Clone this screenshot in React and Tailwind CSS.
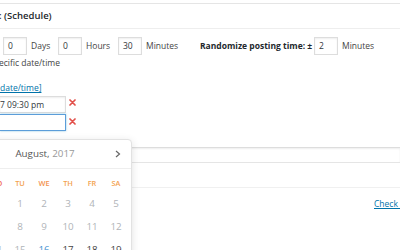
import React from 'react';

// Small red remove icon next to each date field
const RemoveIcon = () => (
  <svg width="7" height="7" viewBox="0 0 7 7" className="shrink-0">
    <path d="M1 1 L6 6 M6 1 L1 6" stroke="#e2504a" strokeWidth="1.7" strokeLinecap="round" />
  </svg>
);

const Chevron = ({ dir }) => (
  <svg width="6" height="8" viewBox="0 0 6 8">
    <path
      d={dir === 'right' ? 'M1 1 L4.5 4 L1 7' : 'M5 1 L1.5 4 L5 7'}
      fill="none"
      stroke="#666"
      strokeWidth="1.2"
    />
  </svg>
);

const NumberBox = ({ value }) => (
  <div className="w-[24px] h-[18px] shrink-0 border border-[#ddd] shadow-[inset_0_1px_2px_rgba(0,0,0,0.07)] bg-white flex items-center pl-[4px] text-[#32373c]">
    {value}
  </div>
);

const weekdays = [
  { label: 'SU', color: 'text-[#f06a5a]' },
  { label: 'MO', color: 'text-[#f06a5a]' },
  { label: 'TU', color: 'text-[#f3a24f]' },
  { label: 'WE', color: 'text-[#f3934f]' },
  { label: 'TH', color: 'text-[#f3a24f]' },
  { label: 'FR', color: 'text-[#f3a24f]' },
  { label: 'SA', color: 'text-[#f3a24f]' },
];

const weeks = [
  [null, null, 1, 2, 3, 4, 5],
  [6, 7, 8, 9, 10, 11, 12],
  [13, 14, 15, 16, 17, 18, 19],
];

const dayClass = (d) => {
  if (d === 16) return 'text-[#3e8ed0]';
  if (d > 16) return 'text-[#444]';
  return 'text-[#b0b4b8]';
};

export default function App() {
  return (
    <div className="relative w-[400px] h-[250px] overflow-hidden bg-white font-['Open_Sans','Noto_Sans',sans-serif] text-[8.5px] leading-[10px] text-[#444]">
      <div className="h-[3px]" />
      <div className="border-t border-[#e5e5e5]">
        {/* box title */}
        <div className="h-[25px] border-b border-[#eee] flex items-center">
          <span className="-ml-[1px] font-semibold text-[9.5px] text-[#23282d]">: (Schedule)</span>
        </div>

        {/* interval row */}
        <div className="pt-[8px] flex items-center whitespace-nowrap">
          <div className="ml-[3px]" />
          <NumberBox value="0" />
          <span className="w-[31px] pl-[4px]">Days</span>
          <NumberBox value="0" />
          <span className="w-[36px] pl-[4px]">Hours</span>
          <NumberBox value="30" />
          <span className="w-[58px] pl-[4px]">Minutes</span>
          <span className="w-[114px] font-bold text-[#23282d]">Randomize posting time: ±</span>
          <NumberBox value="2" />
          <span className="pl-[4px]">Minutes</span>
        </div>

        <div className="mt-[3px] -ml-[1px]">ecific date/time</div>

        <div className="mt-[15px]">
          <span className="text-[#0073aa] underline">date/time]</span>
        </div>

        {/* date fields */}
        <div className="mt-[3px] flex items-start gap-[3px]">
          <div className="w-[66px] h-[17px] border border-[#ddd] shadow-[inset_0_1px_2px_rgba(0,0,0,0.07)] border-l-0 flex items-center text-[#32373c] whitespace-nowrap">
            7 09:30 pm
          </div>
          <div className="mt-[3px]">
            <RemoveIcon />
          </div>
        </div>
        <div className="mt-[1px] flex items-start gap-[3px]">
          <div className="w-[66px] h-[17px] border border-[#5b9dd9] shadow-[0_0_2px_rgba(30,140,190,0.5)] border-l-0" />
          <div className="mt-[4px]">
            <RemoveIcon />
          </div>
        </div>

        {/* content behind the picker */}
        <div className="mt-[16px] h-[16px] border-y border-t-[#ddd] border-b-[#e5e5e5] shadow-[inset_0_1px_2px_rgba(0,0,0,0.07)]" />
        <div className="h-[25px] border-b border-[#f0f0f0]" />
        <div className="mt-[11px] pl-[374px] whitespace-nowrap">
          <span className="text-[#0073aa] underline">Check&nbsp;&nbsp;&nbsp;</span>
        </div>
      </div>

      {/* date picker popup */}
      <div className="absolute left-[-42px] top-[139px] w-[174px] h-[130px] bg-white border border-[#e2e2e2] rounded-[4px] shadow-[0_2px_8px_rgba(0,0,0,0.12)]">
        <div className="h-[29px] border-b border-[#eee] flex items-center justify-between px-[10px]">
          <Chevron dir="left" />
          <div className="text-[9.8px]">
            <span className="text-[#555]">August,</span>
            <span className="text-[#999]"> 2017</span>
          </div>
          <Chevron dir="right" />
        </div>
        <div className="pl-[1px] pr-[3px]">
          <div className="mt-[5px] h-[18px] grid grid-cols-7 items-center text-center text-[7.4px] font-semibold">
            {weekdays.map((w) => (
              <span key={w.label} className={w.color}>
                {w.label}
              </span>
            ))}
          </div>
          {weeks.map((row, i) => (
            <div key={i} className="h-[23px] grid grid-cols-7 items-center text-center text-[9.8px]">
              {row.map((d, j) => (
                <span key={j} className={d ? dayClass(d) : ''}>
                  {d ?? ''}
                </span>
              ))}
            </div>
          ))}
        </div>
      </div>
    </div>
  );
}
